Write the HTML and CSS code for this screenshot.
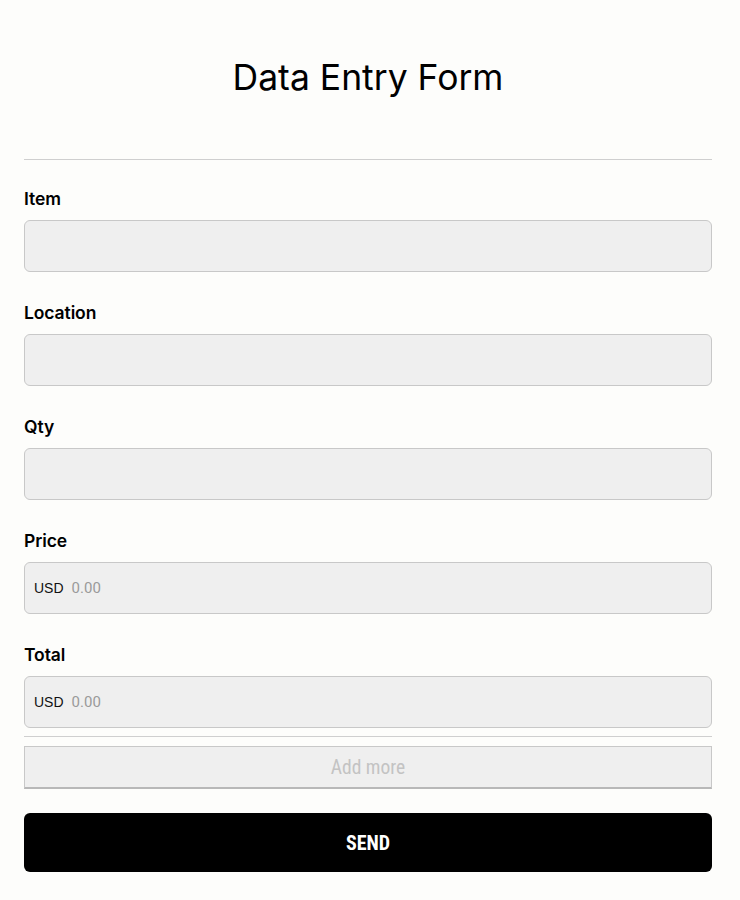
FILE: index.html
```html
<!DOCTYPE html>
<html lang="en">
<head>
<meta charset="utf-8">
<title>Data Entry Form</title>
<link rel="stylesheet" href="styles.css">
</head>
<body>
<main class="page">
  <h1 class="title">Data Entry Form</h1>
  <hr class="divider divider-top">
  <form class="form">
    <div class="field">
      <label class="label">Item</label>
      <div class="input"></div>
    </div>
    <div class="field">
      <label class="label">Location</label>
      <div class="input"></div>
    </div>
    <div class="field">
      <label class="label">Qty</label>
      <div class="input"></div>
    </div>
    <div class="field">
      <label class="label">Price</label>
      <div class="input money"><span class="currency">USD</span><span class="placeholder">0.00</span></div>
    </div>
    <div class="field">
      <label class="label">Total</label>
      <div class="input money"><span class="currency">USD</span><span class="placeholder">0.00</span></div>
    </div>
  </form>
  <hr class="divider divider-bottom">
  <div class="add-more">Add more</div>
  <div class="send">SEND</div>
</main>
</body>
</html>
```

FILE: styles.css
```css
html, body {
  margin: 0;
  padding: 0;
  background: #fdfdfb;
}
body {
  font-family: Inter, "Noto Sans", sans-serif;
  color: #000;
}
.page {
  padding: 0 28px 0 24px;
}
.title {
  margin: 58px 0 61px;
  font-size: 35.5px;
  line-height: 40px;
  font-weight: 400;
  text-align: center;
  letter-spacing: 0;
}
.divider {
  border: 0;
  border-top: 1px solid #cfcfcf;
  margin: 0;
}
.form {
  display: flex;
  flex-direction: column;
  gap: 29px;
  margin-top: 27px;
}
.field {
  display: flex;
  flex-direction: column;
  gap: 9px;
}
.label {
  font-size: 17.5px;
  line-height: 24px;
  font-weight: 600;
  letter-spacing: -0.1px;
}
.input {
  box-sizing: border-box;
  height: 52px;
  border: 1.5px solid #c8c8c8;
  border-radius: 6px;
  background: #efefef;
}
.money {
  display: flex;
  align-items: center;
  padding-left: 9px;
  gap: 8px;
}
.currency {
  font-family: "Liberation Sans", Arial, sans-serif;
  font-size: 14px;
  color: #111;
}
.placeholder {
  font-family: Roboto, sans-serif;
  font-size: 15px;
  color: #9a9a9a;
}
.divider-bottom {
  margin-top: 8px;
}
.add-more {
  box-sizing: border-box;
  margin-top: 9px;
  height: 43px;
  border: 1px solid #c8c8c8;
  border-bottom: 2px solid #b8b8b8;
  background: #efefef;
  display: flex;
  align-items: center;
  justify-content: center;
  font-family: "Liberation Sans Narrow", "Roboto Condensed", Roboto, sans-serif;
  font-size: 19.5px;
  color: #c3c3c3;
}
.send {
  margin-top: 24px;
  height: 59px;
  border-radius: 6px;
  background: #000;
  color: #fff;
  display: flex;
  align-items: center;
  justify-content: center;
  font-family: "Liberation Sans Narrow", "Roboto Condensed", Roboto, sans-serif;
  font-weight: 700;
  font-size: 20px;
}
```
